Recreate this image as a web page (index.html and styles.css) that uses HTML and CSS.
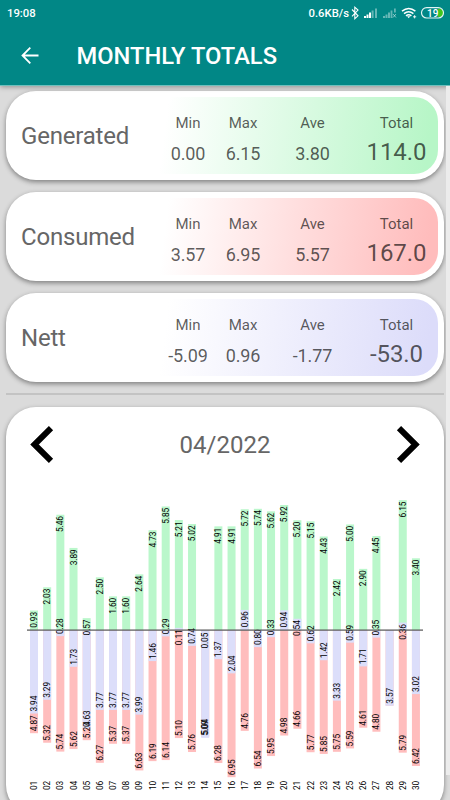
FILE: index.html
```html
<!DOCTYPE html>
<html lang="en">
<head>
<meta charset="utf-8">
<title>Monthly Totals</title>
<link rel="stylesheet" href="styles.css">
</head>
<body>
<header class="top">
  <div class="status">
    <span class="clock">19:08</span>
    <span class="rate">0.6KB/s</span>
    <svg class="tray" viewBox="350 0 96 26" width="96" height="26" aria-hidden="true">
      <path d="M352 9.500l6 6.300-3.200 2.900V7.200l3.200 2.900-6 6.300" fill="none" stroke="#fff" stroke-width="1.100"/>
      <g fill="#fff">
        <path d="M364 16h2v2h-2zM366.500 14.500h2v3.500h-2zM369 12.500h2v5.500h-2z"/>
        <path opacity=".4" d="M371.600 10.500h2v7.500h-2zM375 8.500h2v9.500h-2zM383 16h2v2h-2zM385.500 14.500h2v3.500h-2zM388 12.500h2v5.500h-2zM390.600 10.500h1.800v7.500h-1.800zM394 8.500h1.800v4H394z"/>
      </g>
      <path d="M393 14l3 3.500m0-3.500l-3 3.500" stroke="#fff" opacity=".5" fill="none"/>
      <g fill="none" stroke="#fff" stroke-width="1.500">
        <path d="M402 11.200q6.700-5.400 13.400 0M404 13.600q4.700-3.800 9.400 0M406 15.900q2.700-2.200 5.400 0"/>
        <path d="M413 16.800h3.200m-1.600-1.600v3.200" stroke-width=".9"/>
      </g>
      <path d="M407.100 16.200h3.200l-1.600 2z" fill="#fff"/>
      <path d="M438 8.500h1.500a4.200 4.200 0 0 1 0 8.400H438z" fill="#3fc41c"/>
      <rect x="421.500" y="7.600" width="22" height="10.400" rx="5.200" fill="none" stroke="#e3f4f3" stroke-width="1.200"/>
      <text class="battery" x="427" y="16.500">19</text>
    </svg>
  </div>
  <div class="bar">
    <svg class="back" viewBox="0 0 20 20" width="20" height="20" aria-hidden="true"><path d="M18.500 9.500H3M10.300 1.700L2.500 9.500l7.800 7.800" fill="none" stroke="#fff" stroke-width="1.800"/></svg>
    <h1 class="title">MONTHLY TOTALS</h1>
  </div>
</header>
<main class="page">
  <section class="card">
    <div class="tint green">
      <h2 class="name">Generated</h2>
      <div class="stat min"><span>Min</span><b>0.00</b></div>
      <div class="stat max"><span>Max</span><b>6.15</b></div>
      <div class="stat ave"><span>Ave</span><b>3.80</b></div>
      <div class="stat total"><span>Total</span><b>114.0</b></div>
    </div>
  </section>
  <section class="card">
    <div class="tint red">
      <h2 class="name">Consumed</h2>
      <div class="stat min"><span>Min</span><b>3.57</b></div>
      <div class="stat max"><span>Max</span><b>6.95</b></div>
      <div class="stat ave"><span>Ave</span><b>5.57</b></div>
      <div class="stat total"><span>Total</span><b>167.0</b></div>
    </div>
  </section>
  <section class="card">
    <div class="tint blue">
      <h2 class="name">Nett</h2>
      <div class="stat min"><span>Min</span><b>-5.09</b></div>
      <div class="stat max"><span>Max</span><b>0.96</b></div>
      <div class="stat ave"><span>Ave</span><b>-1.77</b></div>
      <div class="stat total"><span>Total</span><b>-53.0</b></div>
    </div>
  </section>
  <hr class="rule">
  <section class="chart-card">
    <div class="month">
      <svg viewBox="0 0 24 38" width="24" height="38" aria-hidden="true"><path d="M21 2.200L4.500 18.500 21 34.800" fill="none" stroke="#000" stroke-width="6"/></svg>
      <span>04/2022</span>
      <svg viewBox="0 0 24 38" width="24" height="38" aria-hidden="true"><path d="M3 2.200l16.500 16.300L3 34.800" fill="none" stroke="#000" stroke-width="6"/></svg>
    </div>
    <svg class="chart" id="chart" viewBox="6 490 438 325" width="438" height="325"></svg>
  </section>
</main>
<div class="scroll"></div>
<script src="chart.js"></script>
</body>
</html>
```
FILE: styles.css
```css
* { box-sizing: border-box; }
body {
  margin: 0;
  height: 800px;
  overflow: hidden;
  position: relative;
  background: #dbdbdb;
  font-family: Roboto, "Liberation Sans", sans-serif;
  color: #666;
}
.top {
  position: relative;
  height: 86px;
  background: #018786;
  border-bottom: 1px solid #6fc0bd;
  box-shadow: 0 1px 5px rgba(0, 0, 0, .35);
  color: #fff;
}
.status {
  height: 26px;
  display: flex;
  align-items: center;
  padding: 0 4px 0 7px;
  font-size: 11.3px;
  font-weight: 500;
}
.rate { margin-left: auto; margin-right: 1px; }
.battery { font-size: 10px; font-weight: 500; fill: #fff; }
.bar { height: 59px; display: flex; align-items: center; padding-left: 20px; }
.title { margin: 1px 0 0 36.5px; font-size: 23.7px; font-weight: 500; line-height: 30px; }
.page { padding: 5px 6px 0; }
.card, .chart-card {
  background: #fff;
  border-radius: 30px;
  box-shadow: 0 2px 5px rgba(0, 0, 0, .42);
}
.card { height: 89px; padding: 6px; margin-bottom: 12px; }
.tint {
  height: 77px;
  border-radius: 24px;
  display: grid;
  grid-template-columns: 148px 56px 54px 85px 83px;
  align-items: start;
}
.green { background: linear-gradient(97deg, #fff 36%, #b7f6c7 97%); }
.red { background: linear-gradient(97deg, #fff 36%, #ffbcbc 97%); }
.blue { background: linear-gradient(97deg, #fff 36%, #dcdcfa 97%); }
.name { margin: 24px 0 0 9px; font-size: 24px; line-height: 30px; font-weight: 400; letter-spacing: -.2px; }
.stat { display: flex; flex-direction: column; align-items: center; padding-top: 16px; color: rgba(0, 0, 0, .65); }
.stat span { font-size: 15px; line-height: 20px; }
.stat b { font-size: 18px; line-height: 24px; font-weight: 400; margin-top: 9px; letter-spacing: -.1px; }
.stat.total b { font-size: 24px; line-height: 28px; margin-top: 5px; }
.rule { height: 2px; border: 0; margin: 11px 0 12px; background: #c3c3c3; }
.card + .rule { margin-top: -1px; }
.chart-card { height: 408px; overflow: hidden; }
.month {
  height: 83px;
  padding: 0 24px 7px;
  display: flex;
  justify-content: space-between;
  align-items: center;
  font-size: 24px;
}
.chart { display: block; }
.chart text { font-size: 8.3px; letter-spacing: -.1px; fill: #000; }
.gen { fill: #baf7cb; }
.con { fill: #ffbdbd; }
.net { fill: #dcdefa; }
.axis { fill: #555; }
.scroll { position: absolute; top: 86px; right: 0; width: 4px; height: 689px; background: #ececec; }
```
FILE: chart.js
```js
// [generated, consumed] for each day of the month
const days = [
  [0.93, 4.87], [2.03, 5.32], [5.46, 5.74], [3.89, 5.62], [0.57, 5.20],
  [2.50, 6.27], [1.60, 5.37], [1.60, 5.37], [2.64, 6.63], [4.73, 6.19],
  [5.85, 6.14], [5.21, 5.10], [5.02, 5.76], [-0.05, 5.04], [4.91, 6.28],
  [4.91, 6.95], [5.72, 4.76], [5.74, 6.54], [5.62, 5.95], [5.92, 4.98],
  [5.20, 4.66], [5.15, 5.77], [4.43, 5.85], [2.42, 5.75], [5.00, 5.59],
  [2.90, 4.61], [4.45, 4.80], [0, 3.57], [6.15, 5.79], [3.40, 6.42]
];
const chart = document.getElementById("chart");
const zero = 630.2, scale = 21.15, left = 34, pitch = 13.17, width = 8;

function add(tag, attrs, text) {
  const el = document.createElementNS("http://www.w3.org/2000/svg", tag);
  for (const key in attrs) el.setAttribute(key, attrs[key]);
  if (text) el.textContent = text;
  chart.appendChild(el);
}
function bar(cx, value, cls) {
  const end = zero - value * scale;
  add("rect", { x: cx - width / 2, y: Math.min(zero, end), width, height: Math.abs(end - zero), class: cls });
}
function label(cx, y, text, anchor) {
  add("text", { transform: `translate(${cx + 3} ${y}) rotate(-90)`, "text-anchor": anchor }, text);
}
function valueLabel(cx, value, atTop) {
  const y = zero - value * scale;
  label(cx, atTop ? y + 1.5 : y - 2, Math.abs(value).toFixed(2), atTop ? "end" : "start");
}
days.forEach(([gen, con], i) => {
  const cx = left + i * pitch;
  const net = gen - con;
  bar(cx, gen, "gen");
  bar(cx, -con, "con");
  bar(cx, net, "net");
  if (gen) valueLabel(cx, gen, true);
  valueLabel(cx, -con, false);
  if (gen) valueLabel(cx, net, net > 0);
  label(cx, 790, String(i + 1).padStart(2, "0"), "start");
});
add("rect", { x: 27, y: 629.5, width: 396, height: 1.2, class: "axis" });
```
